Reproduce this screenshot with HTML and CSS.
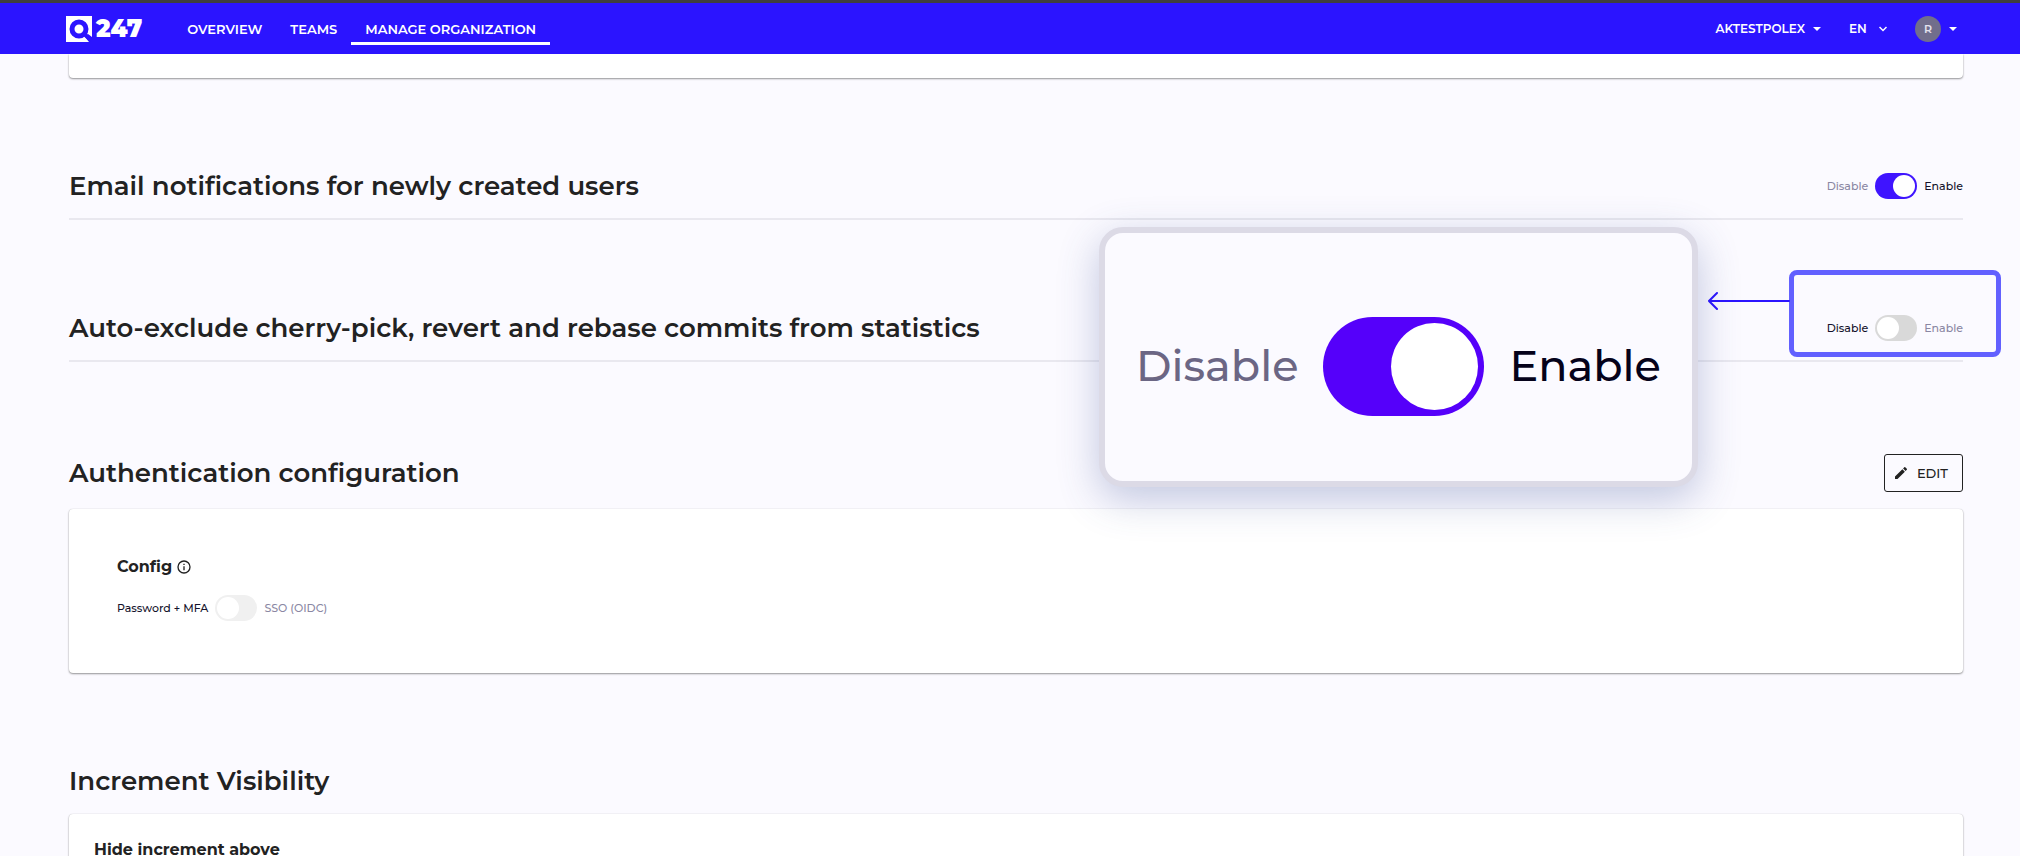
FILE: index.html
```html
<!DOCTYPE html>
<html lang="en">
<head>
  <meta charset="UTF-8" />
  <meta name="viewport" content="width=device-width, initial-scale=1.0"/>
  <title>247 - Manage organization</title>
  <link rel="stylesheet" href="styles.css">
</head>
<body>
  <header class="topbar">
    <a class="logo" href="#">
      <svg width="26" height="26" viewBox="0 0 26 26" aria-hidden="true">
        <path fill="#fff" d="M0 0h26v21l-4-3-3 3 4 5H0z"/>
        <circle cx="13" cy="13" r="7" fill="none" stroke="#2b14ff" stroke-width="5"/>
        <path d="M17 17l8 7" stroke="#2b14ff" stroke-width="4"/>
      </svg>
      <span>247</span>
    </a>
    <nav class="nav">
      <a href="#">OVERVIEW</a>
      <a href="#">TEAMS</a>
      <a href="#" class="active">MANAGE ORGANIZATION</a>
    </nav>
    <div class="tools">
      <button class="menu-btn" type="button">AKTESTPOLEX
        <svg width="8" height="4" viewBox="0 0 8 4" aria-hidden="true"><path fill="#fff" d="M0 0h8L4 4z"/></svg>
      </button>
      <div class="lang">
        <select aria-label="Language"><option>EN</option></select>
        <svg width="8" height="6" viewBox="0 0 8 6" aria-hidden="true"><path fill="none" stroke="#fff" stroke-width="1.500" d="M.5 1L4 4.500 7.500 1"/></svg>
      </div>
      <button class="menu-btn user" type="button"><span class="avatar">R</span>
        <svg width="8" height="4" viewBox="0 0 8 4" aria-hidden="true"><path fill="#fff" d="M0 0h8L4 4z"/></svg>
      </button>
    </div>
  </header>

  <main class="page">
    <div class="card card-end"></div>

    <section class="row">
      <h2>Email notifications for newly created users</h2>
      <label class="toggle">
        <span class="off">Disable</span>
        <input type="checkbox" checked>
        <span class="on">Enable</span>
      </label>
    </section>

    <section class="row">
      <h2>Auto-exclude cherry-pick, revert and rebase commits from statistics</h2>
      <label class="toggle">
        <span class="off">Disable</span>
        <input type="checkbox">
        <span class="on">Enable</span>
      </label>
      <div class="highlight"></div>
      <svg class="arrow" width="82" height="20" viewBox="0 0 82 20" aria-hidden="true">
        <path fill="none" stroke="#2b14ff" stroke-width="2" stroke-linecap="round" d="M81 10H1M9 2L1 10l8 8"/>
      </svg>
      <div class="callout">
        <label class="toggle big">
          <span class="off">Disable</span>
          <input type="checkbox" checked>
          <span class="on">Enable</span>
        </label>
      </div>
    </section>

    <section class="block">
      <div class="block-head">
        <h2>Authentication configuration</h2>
        <button class="edit" type="button">
          <svg width="16" height="16" viewBox="0 0 24 24" aria-hidden="true"><path fill="currentColor" d="M3 17.250V21h3.750L17.810 9.940l-3.750-3.750L3 17.250zM20.710 7.040a1 1 0 0 0 0-1.410l-2.340-2.340a1 1 0 0 0-1.410 0l-1.830 1.830 3.750 3.750 1.830-1.830z"/></svg>
          EDIT
        </button>
      </div>
      <div class="card config">
        <h3>Config
          <svg width="16" height="16" viewBox="0 0 24 24" aria-hidden="true"><path fill="currentColor" d="M11 7h2v2h-2zm0 4h2v6h-2zm1-9a10 10 0 1 0 0 20 10 10 0 0 0 0-20zm0 18a8 8 0 1 1 0-16 8 8 0 0 1 0 16z"/></svg>
        </h3>
        <label class="toggle">
          <span class="off">Password + MFA</span>
          <input type="checkbox" disabled>
          <span class="on">SSO (OIDC)</span>
        </label>
      </div>
    </section>

    <section class="block">
      <div class="block-head">
        <h2>Increment Visibility</h2>
      </div>
      <div class="card increment">
        <h3>Hide increment above</h3>
      </div>
    </section>
  </main>
</body>
</html>
```

FILE: styles.css
```css
* {
  box-sizing: border-box;
}

body {
  margin: 0;
  background: #fbfaff;
  color: #222;
  font-family: "Montserrat", "Inter", sans-serif;
}

h2, h3 {
  margin: 0;
}

h2 {
  font-size: 26px;
  line-height: 32px;
  font-weight: 600;
}

h3 {
  display: flex;
  align-items: center;
  gap: 4px;
  font-size: 16px;
  line-height: 20px;
  font-weight: 700;
}

button, select {
  font: inherit;
  color: inherit;
  background: none;
  border: 0;
  padding: 0;
  cursor: pointer;
}

.topbar {
  display: flex;
  align-items: center;
  height: 54px;
  padding: 0 63px 0 66px;
  background: #2b14ff;
  border-top: 3px solid #3f3f3f;
  color: #fff;
}

.logo {
  display: flex;
  align-items: center;
  gap: 4px;
  color: #fff;
  font-size: 24px;
  font-weight: 900;
  text-decoration: none;
}

.nav {
  display: flex;
  margin-left: 31px;
}

.nav a {
  padding: 7px 14px 4px;
  border-bottom: 3px solid transparent;
  color: #fff;
  font-size: 13px;
  line-height: 18px;
  font-weight: 600;
  text-decoration: none;
}

.nav .active {
  border-color: #fff;
}

.tools {
  display: flex;
  align-items: center;
  gap: 28px;
  margin-left: auto;
  font-size: 12px;
  font-weight: 600;
}

.menu-btn, .lang {
  display: flex;
  align-items: center;
  gap: 8px;
}

.lang {
  gap: 12px;
}

.lang select {
  appearance: none;
}

.avatar {
  width: 26px;
  height: 26px;
  border-radius: 50%;
  background: #716e8c;
  color: #e4e2ee;
  font-size: 11px;
  line-height: 26px;
}

.page {
  height: calc(100vh - 54px);
  padding: 0 57px 0 69px;
  overflow: hidden;
}

.card {
  background: #fff;
  border-radius: 4px;
  box-shadow: 0 1px 2px rgba(0, 0, 0, 0.4), 0 0 1px rgba(0, 0, 0, 0.2);
}

.card-end {
  height: 24px;
  border-radius: 0 0 4px 4px;
}

.row {
  position: relative;
  display: flex;
  align-items: center;
  justify-content: space-between;
  height: 142px;
  padding-top: 76px;
  border-bottom: 2px solid #e9e8ef;
}

.toggle {
  display: flex;
  align-items: center;
  gap: 7px;
  color: #14122b;
  font-size: 11px;
  line-height: 16px;
  font-weight: 500;
}

.toggle input {
  appearance: none;
  width: 42px;
  height: 26px;
  margin: 0;
  padding: 2px;
  border-radius: 13px;
  background: #d9d9d9;
}

.toggle input::before {
  content: "";
  display: block;
  height: 100%;
  aspect-ratio: 1;
  border-radius: 50%;
  background: #fff;
}

.toggle input:checked {
  background: #3f14ff;
}

.toggle input:checked::before {
  margin-left: auto;
}

.toggle input:disabled {
  background: #f0f0f0;
}

.toggle:has(:checked) .off,
.toggle:not(:has(:checked)) .on {
  color: #8a87a3;
}

.highlight {
  position: absolute;
  top: 50px;
  right: -38px;
  width: 212px;
  height: 87px;
  border: 5px solid #6260ff;
  border-radius: 8px;
}

.arrow {
  position: absolute;
  top: 71px;
  right: 173px;
}

.callout {
  position: absolute;
  z-index: 1;
  top: 7px;
  right: 265px;
  display: flex;
  align-items: center;
  justify-content: center;
  width: 599px;
  height: 260px;
  padding-top: 18px;
  border: 6px solid #dcdae6;
  border-radius: 24px;
  background: #fbfaff;
  box-shadow: 0 12px 40px rgba(60, 80, 150, 0.3);
}

.toggle.big {
  gap: 25px;
  color: #05021a;
  font-size: 43px;
  line-height: 52px;
}

.big input {
  width: 161px;
  height: 99px;
  padding: 6px;
  border-radius: 50px;
}

.toggle.big input:checked {
  background: #5500fa;
}

.toggle.big:has(:checked) .off {
  color: #6b6684;
}

.block {
  padding-top: 92px;
}

.block-head {
  display: flex;
  align-items: center;
  justify-content: space-between;
  margin-bottom: 17px;
}

.edit {
  display: flex;
  align-items: center;
  gap: 8px;
  height: 38px;
  padding: 0 14px 0 8px;
  border: 1px solid #222;
  border-radius: 3px;
  font-size: 13px;
  font-weight: 500;
}

.config {
  height: 164px;
  padding: 48px;
}

.config .toggle {
  margin-top: 18px;
}

.increment {
  height: 120px;
  padding: 26px 25px;
}
```
